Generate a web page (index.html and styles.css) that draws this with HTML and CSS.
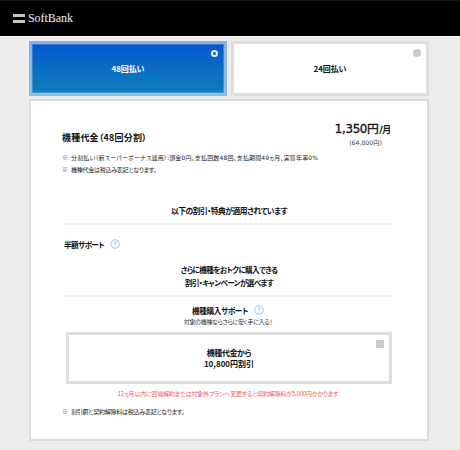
FILE: index.html
```
<!DOCTYPE html>
<html lang="ja">
<head>
<meta charset="utf-8">
<title>SoftBank</title>
<link rel="stylesheet" href="styles.css">
</head>
<body>
<header class="header">
  <span class="mark"></span><span class="brand">SoftBank</span>
</header>
<main class="main">
  <div class="tabs">
    <div class="tab tab-on"><span>48回払い</span><i class="ring"></i></div>
    <div class="tab"><span>24回払い</span><i class="dot"></i></div>
  </div>
  <section class="panel">
    <div class="summary">
      <h1 class="title">機種代金（48回分割）</h1>
      <div class="price">
        <div class="amount">1,350円<small>/月</small></div>
        <div class="total">(64,800円)</div>
      </div>
    </div>
    <ul class="notes">
      <li class="n1"><b>※</b><span>分割払い（新スーパーボーナス適用）:頭金0円、支払回数48回、支払期間49ヵ月、実質年率0%</span></li>
      <li class="n2"><b>※</b><span>機種代金は税込み表記となります。</span></li>
    </ul>
    <h2 class="applied">以下の割引・特典が適用されています</h2>
    <div class="support">
      <span>半額サポート</span>
      <svg class="help" viewBox="0 0 10 10"><circle cx="5" cy="5" r="4.2"/><path d="M3.8 4.1C3.8 2.5 6.3 2.6 6.2 4.1C6.1 5 5 4.9 5 6M5 6.8V7.6"/></svg>
    </div>
    <h2 class="more"><span class="m1">さらに機種をおトクに購入できる</span><br><span class="m2">割引・キャンペーンが選べます</span></h2>
    <div class="campaign">
      <span>機種購入サポート</span>
      <svg class="help" viewBox="0 0 10 10"><circle cx="5" cy="5" r="4.2"/><path d="M3.8 4.1C3.8 2.5 6.3 2.6 6.2 4.1C6.1 5 5 4.9 5 6M5 6.8V7.6"/></svg>
    </div>
    <p class="sub">対象の機種ならさらに安く手に入る！</p>
    <div class="option"><div><span class="o1">機種代金から</span><br><span class="o2">10,800円割引</span></div><i class="check"></i></div>
    <p class="warning">12ヵ月以内に回線解約または対象外プランへ変更すると契約解除料が5,000円かかります</p>
    <ul class="notes last">
      <li class="n3"><b>※</b><span>割引額と契約解除料は税込み表記となります。</span></li>
    </ul>
  </section>
</main>
</body>
</html>
```
FILE: styles.css
```
* { box-sizing: border-box; margin: 0; padding: 0; }
body {
  width: 460px; height: 450px; overflow: hidden;
  background: #ececec; color: #111;
  font-family: "Noto Sans CJK JP", sans-serif;
  font-size: 8px; font-feature-settings: "palt"; white-space: nowrap;
}
ul { list-style: none; }
.header {
  height: 37px; display: flex; align-items: center; padding: 0 0 1px 13px;
  background: #000; border-top: 1px solid #151515; border-bottom: 1px solid #f8f8f8;
}
.mark { width: 12px; height: 9px; border: solid #c6c6c6; border-width: 3px 0; }
.brand { margin-left: 3px; color: #eee; font: 12px/16px "Liberation Serif", serif; letter-spacing: -.05px; }
.main { padding: 4px 31px 0 29px; }
.tabs { display: flex; gap: 4px; }
.tab {
  position: relative; width: 198px; height: 55px; display: flex; align-items: center; justify-content: center;
  background: #fff; border: 3px solid #dedede; font-weight: 700; letter-spacing: -.1px;
}
.tab-on {
  color: #fff; border: 0; box-shadow: inset 0 0 0 3px rgba(210,223,235,.55), inset 0 0 0 4px rgba(210,223,235,.25);
  background: linear-gradient(#0657cf, #0d80b9);
}
.ring, .dot { position: absolute; border-radius: 50%; }
.ring { width: 7px; height: 7px; top: 9px; right: 9px; border: 2px solid #e4eefa; }
.dot { width: 8px; height: 8px; top: 5px; right: 5px; background: #ccc; }
.panel { height: 342px; margin-top: 3px; padding: 20px 33px 0 31px; background: #fff; border: 2px solid #dcdcdc; }
.summary { display: flex; justify-content: space-between; }
.title { margin-top: 9px; font-size: 9px; line-height: 16px; letter-spacing: .2px; }
.price { width: 66px; margin-right: -2px; }
.amount {
  text-align: right; padding-right: 5px; font: 11.8px/16px "DejaVu Sans", "Noto Sans CJK JP", sans-serif;
  letter-spacing: -.3px; -webkit-text-stroke: .35px #111;
}
.amount small { margin-left: 1px; font-size: 9px; }
.total { padding-left: 5px; text-align: center; font: 6.2px/10px "DejaVu Sans", "Noto Sans CJK JP", sans-serif; color: #444; }
.notes { margin-top: 4px; font-size: 6px; line-height: 12px; color: #222; letter-spacing: -.25px; }
.n1 { font-family: "DejaVu Sans", "Noto Sans CJK JP", sans-serif; letter-spacing: .16px; }
.notes li { display: flex; }
.notes b { width: 9px; font-weight: 400; font-size: 6px; color: #6b653f; font-family: "Noto Sans CJK JP", sans-serif; }
.applied { height: 22px; margin: 27px 0 0 2px; font-size: 7.8px; line-height: 16px; text-align: center; letter-spacing: -.5px; }
.applied, .more { border-bottom: 2px solid #f5f5f5; }
.support, .campaign { display: flex; align-items: center; gap: 6px; height: 16px; font-size: 7.6px; font-weight: 700; letter-spacing: -.6px; }
.support { margin: 11px 0 0 2px; }
.help { width: 10px; height: 10px; fill: none; stroke: #83b7e2; stroke-width: .8; }
.more { height: 33px; margin: 12px 0 0 2px; font-size: 7.6px; line-height: 12.5px; text-align: center; letter-spacing: -.65px; }
.campaign { justify-content: center; margin-top: 5px; letter-spacing: -.35px; }
.sub { margin: -1px 0 0 0; font-size: 6px; line-height: 10px; text-align: center; color: #333; letter-spacing: -.3px; }
.option {
  position: relative; width: 326px; height: 52px; margin: 5px 0 0 4px; display: flex; align-items: center; justify-content: center;
  border: 3px solid #dedede; text-align: center; font-weight: 700; line-height: 11.5px;
}
.o1 { letter-spacing: -.4px; }
.check { position: absolute; top: 5px; right: 5px; width: 8px; height: 8px; background: #c9cbca; }
.warning { margin-top: 4px; font-size: 6px; line-height: 12px; text-align: center; color: #ef5a6c; letter-spacing: -.2px; }
.last { margin-top: 6px; }
```
